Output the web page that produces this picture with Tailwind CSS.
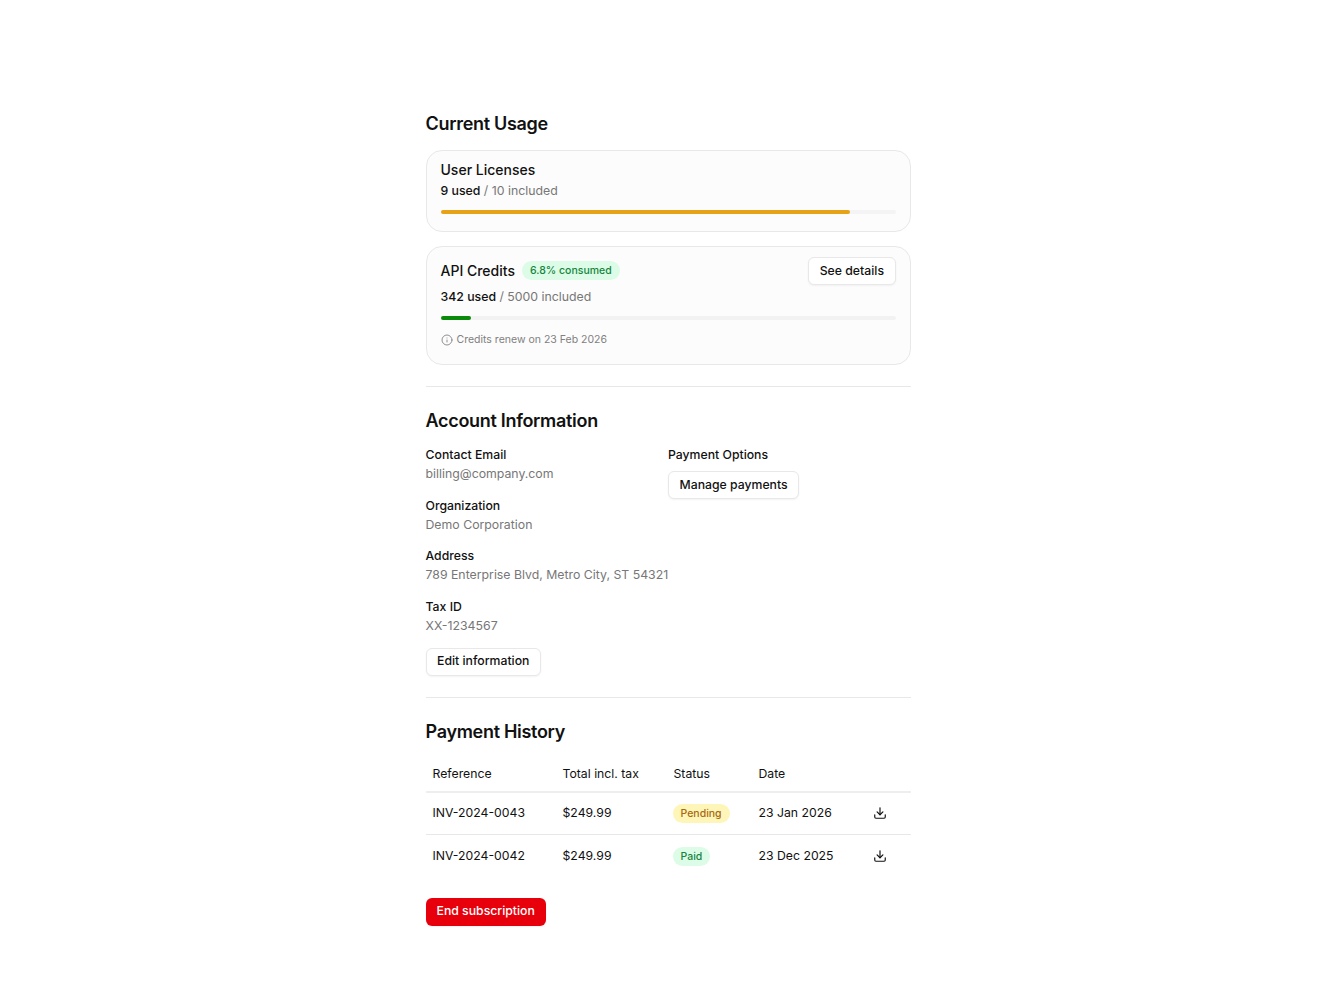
<!DOCTYPE html>
<html lang="en">
<head>
  <meta charset="UTF-8" />
  <title>Billing</title>
  <script src="https://cdn.jsdelivr.net/npm/@tailwindcss/browser@4"></script>
</head>
<body class="bg-white min-h-screen font-['Inter',sans-serif] text-[#111111]">
  <main class="w-[485px] mx-auto pt-[110px] pb-[76px]">

    <!-- Current usage -->
    <section>
      <h2 class="text-lg leading-7 font-semibold tracking-[-0.3px] mb-[12px]">Current Usage</h2>

      <div class="h-[82px] rounded-2xl border border-[#e8e8e8] bg-[#fcfcfc] px-[14px] pt-[9px] mb-[14px]">
        <div class="text-sm leading-5 font-medium">User Licenses</div>
        <div class="text-[12.3px] leading-5 mt-[0.5px] text-[#777777]"><span class="font-medium text-[#111111]">9 used</span> / 10 included</div>
        <div class="h-1 mt-[9.5px] rounded-full bg-[#f4f4f4]">
          <div class="h-1 rounded-full bg-[#e6a317] w-[90%]"></div>
        </div>
      </div>

      <div class="h-[119px] rounded-2xl border border-[#e8e8e8] bg-[#fcfcfc] px-[14px] pt-[10px]">
        <div class="flex items-center justify-between h-[28px]">
          <div class="flex items-center gap-[7px]">
            <span class="text-sm font-medium">API Credits</span>
            <span class="text-[10.5px] leading-[19px] font-medium px-2 mb-[2px] rounded-full bg-[#dcfce7] text-[#16853f]">6.8% consumed</span>
          </div>
          <button class="h-[28px] px-[10.5px] rounded-md border border-[#e8e8e8] bg-white shadow-xs text-[12.25px] font-medium">See details</button>
        </div>
        <div class="text-[12.3px] leading-5 mt-[1.5px] text-[#777777]"><span class="font-medium text-[#111111]">342 used</span> / 5000 included</div>
        <div class="h-1 mt-[9.5px] rounded-full bg-[#f2f2f2]">
          <div class="h-1 rounded-full bg-[#0a8a0a] w-[6.8%]"></div>
        </div>
        <div class="flex items-center gap-1 mt-[12px] text-[10.5px] leading-4 text-[#808080]">
          <svg class="w-3 h-3" viewBox="0 0 24 24" fill="none" stroke="currentColor" stroke-width="1.75" stroke-linecap="round" stroke-linejoin="round"><circle cx="12" cy="12" r="10"/><path d="M12 16v-4"/><path d="M12 8h.01"/></svg>
          <span>Credits renew on 23 Feb 2026</span>
        </div>
      </div>
    </section>

    <hr class="border-[#e8e8e8] mt-[21px] mb-[20px]" />

    <!-- Account information -->
    <section>
      <h2 class="text-lg leading-7 font-semibold tracking-[-0.3px] mb-[10px]">Account Information</h2>
      <div class="grid grid-cols-2">
        <div>
          <div class="text-[12.25px] leading-[19px] font-medium">Contact Email</div>
          <div class="text-[12.3px] leading-5 text-[#777777]">billing@company.com</div>
          <div class="text-[12.25px] leading-[19px] font-medium mt-[11.5px]">Organization</div>
          <div class="text-[12.3px] leading-5 text-[#777777]">Demo Corporation</div>
          <div class="text-[12.25px] leading-[19px] font-medium mt-[11.5px]">Address</div>
          <div class="text-[12.3px] leading-5 text-[#777777] whitespace-nowrap">789 Enterprise Blvd, Metro City, ST 54321</div>
          <div class="text-[12.25px] leading-[19px] font-medium mt-[11.5px]">Tax ID</div>
          <div class="text-[12.3px] leading-5 text-[#777777]">XX-1234567</div>
          <button class="h-[28px] px-[10.5px] mt-[12px] rounded-md border border-[#e8e8e8] bg-white shadow-xs text-[12.25px] font-medium">Edit information</button>
        </div>
        <div>
          <div class="text-[12.25px] leading-[19px] font-medium">Payment Options</div>
          <button class="h-[28px] px-[10.5px] mt-[7px] rounded-md border border-[#e8e8e8] bg-white shadow-xs text-[12.25px] font-medium">Manage payments</button>
        </div>
      </div>
    </section>

    <hr class="border-[#e8e8e8] mt-[21px] mb-[20px]" />

    <!-- Payment history -->
    <section>
      <h2 class="text-lg leading-7 font-semibold tracking-[-0.3px] mb-[12px]">Payment History</h2>
      <table class="w-full text-[12.25px] table-fixed">
        <thead>
          <tr class="h-[34px] border-b-2 border-[#eeeeee] text-left">
            <th class="font-normal pl-[7px] w-[137px]">Reference</th>
            <th class="font-normal w-[111px]">Total incl. tax</th>
            <th class="font-normal w-[85px]">Status</th>
            <th class="font-normal w-[114px]">Date</th>
            <th></th>
          </tr>
        </thead>
        <tbody>
          <tr class="h-[43px] border-b border-[#e8e8e8]">
            <td class="pl-[7px]">INV-2024-0043</td>
            <td>$249.99</td>
            <td><span class="inline-block -ml-px text-[10.5px] leading-[19px] font-medium px-2 rounded-full bg-[#fef6b8] text-[#a8690f]">Pending</span></td>
            <td>23 Jan 2026</td>
            <td>
              <svg class="w-[14px] h-[14px] ml-[0.5px]" viewBox="0 0 24 24" fill="none" stroke="currentColor" stroke-width="2" stroke-linecap="round" stroke-linejoin="round"><path d="M12 15V3"/><path d="M21 15v4a2 2 0 0 1-2 2H5a2 2 0 0 1-2-2v-4"/><path d="m7 10 5 5 5-5"/></svg>
            </td>
          </tr>
          <tr class="h-[43px]">
            <td class="pl-[7px]">INV-2024-0042</td>
            <td>$249.99</td>
            <td><span class="inline-block -ml-px text-[10.5px] leading-[19px] font-medium px-2 rounded-full bg-[#dcfce7] text-[#16853f]">Paid</span></td>
            <td>23 Dec 2025</td>
            <td>
              <svg class="w-[14px] h-[14px] ml-[0.5px]" viewBox="0 0 24 24" fill="none" stroke="currentColor" stroke-width="2" stroke-linecap="round" stroke-linejoin="round"><path d="M12 15V3"/><path d="M21 15v4a2 2 0 0 1-2 2H5a2 2 0 0 1-2-2v-4"/><path d="m7 10 5 5 5-5"/></svg>
            </td>
          </tr>
        </tbody>
      </table>
      <button class="h-[28px] px-[11px] mt-[20px] rounded-md bg-[#e7000b] text-white shadow-xs text-[12.25px] font-medium">End subscription</button>
    </section>
  </main>
</body>
</html>
